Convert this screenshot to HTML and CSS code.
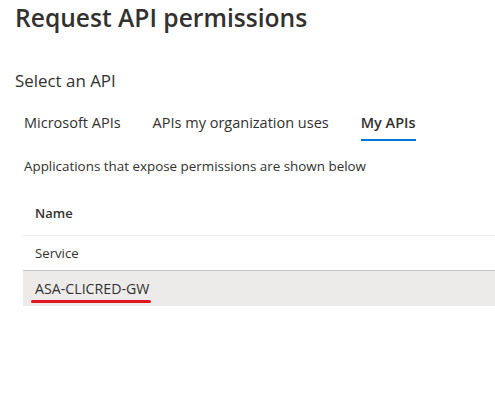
FILE: index.html
```html
<!DOCTYPE html>
<html>
<head>
<meta charset="utf-8">
<link rel="stylesheet" href="styles.css">
</head>
<body>
<div class="page">
  <h1 class="title">Request API permissions</h1>
  <h2 class="subtitle">Select an API</h2>
  <div class="tabs">
    <span class="tab">Microsoft APIs</span>
    <span class="tab">APIs my organization uses</span>
    <span class="tab active">My APIs</span>
  </div>
  <p class="desc">Applications that expose permissions are shown below</p>
  <div class="table">
    <div class="row header"><span class="cell">Name</span></div>
    <div class="row"><span class="cell">Service</span></div>
    <div class="row selected"><span class="cell marked">ASA-CLICRED-GW</span></div>
  </div>
</div>
</body>
</html>
```
FILE: styles.css
```css
html, body {
  margin: 0;
  padding: 0;
  background: #ffffff;
}
.page {
  font-family: "Open Sans", "Noto Sans", sans-serif;
  color: #323130;
  padding: 0 0 0 15px;
  width: 480px;
}
.title {
  margin: 0;
  font-size: 24.6px;
  font-weight: 600;
  line-height: 36px;
}
.subtitle {
  margin: 34px 0 0 0;
  font-size: 16.9px;
  font-weight: 400;
  line-height: 22px;
}
.tabs {
  display: flex;
  gap: 32px;
  margin: 21px 0 0 9px;
}
.tab {
  font-size: 14.5px;
  line-height: 20px;
  padding-bottom: 6px;
  border-bottom: 2px solid transparent;
}
.tab.active {
  font-weight: 600;
  border-bottom-color: #0078d4;
}
.desc {
  margin: 16px 0 0 9px;
  font-size: 13.4px;
  line-height: 18px;
}
.table {
  margin: 16px 0 0 8px;
}
.row {
  display: flex;
  align-items: center;
  height: 34px;
  border-bottom: 1px solid #edebe9;
  padding-left: 12px;
  font-size: 13.2px;
}
.row.header {
  font-weight: 600;
  font-size: 13px;
  height: 44px;
}
.row.selected {
  background: #edebe9;
  border-top: 1px solid #c8c6c4;
  border-bottom: none;
  margin-top: -1px;
  height: 35px;
}
.cell.marked {
  position: relative;
  font-size: 14.2px;
}
.cell.marked::after {
  content: "";
  position: absolute;
  left: -4px;
  right: -2px;
  bottom: -5px;
  height: 3px;
  border-radius: 2px;
  background: #e0141e;
}
```
